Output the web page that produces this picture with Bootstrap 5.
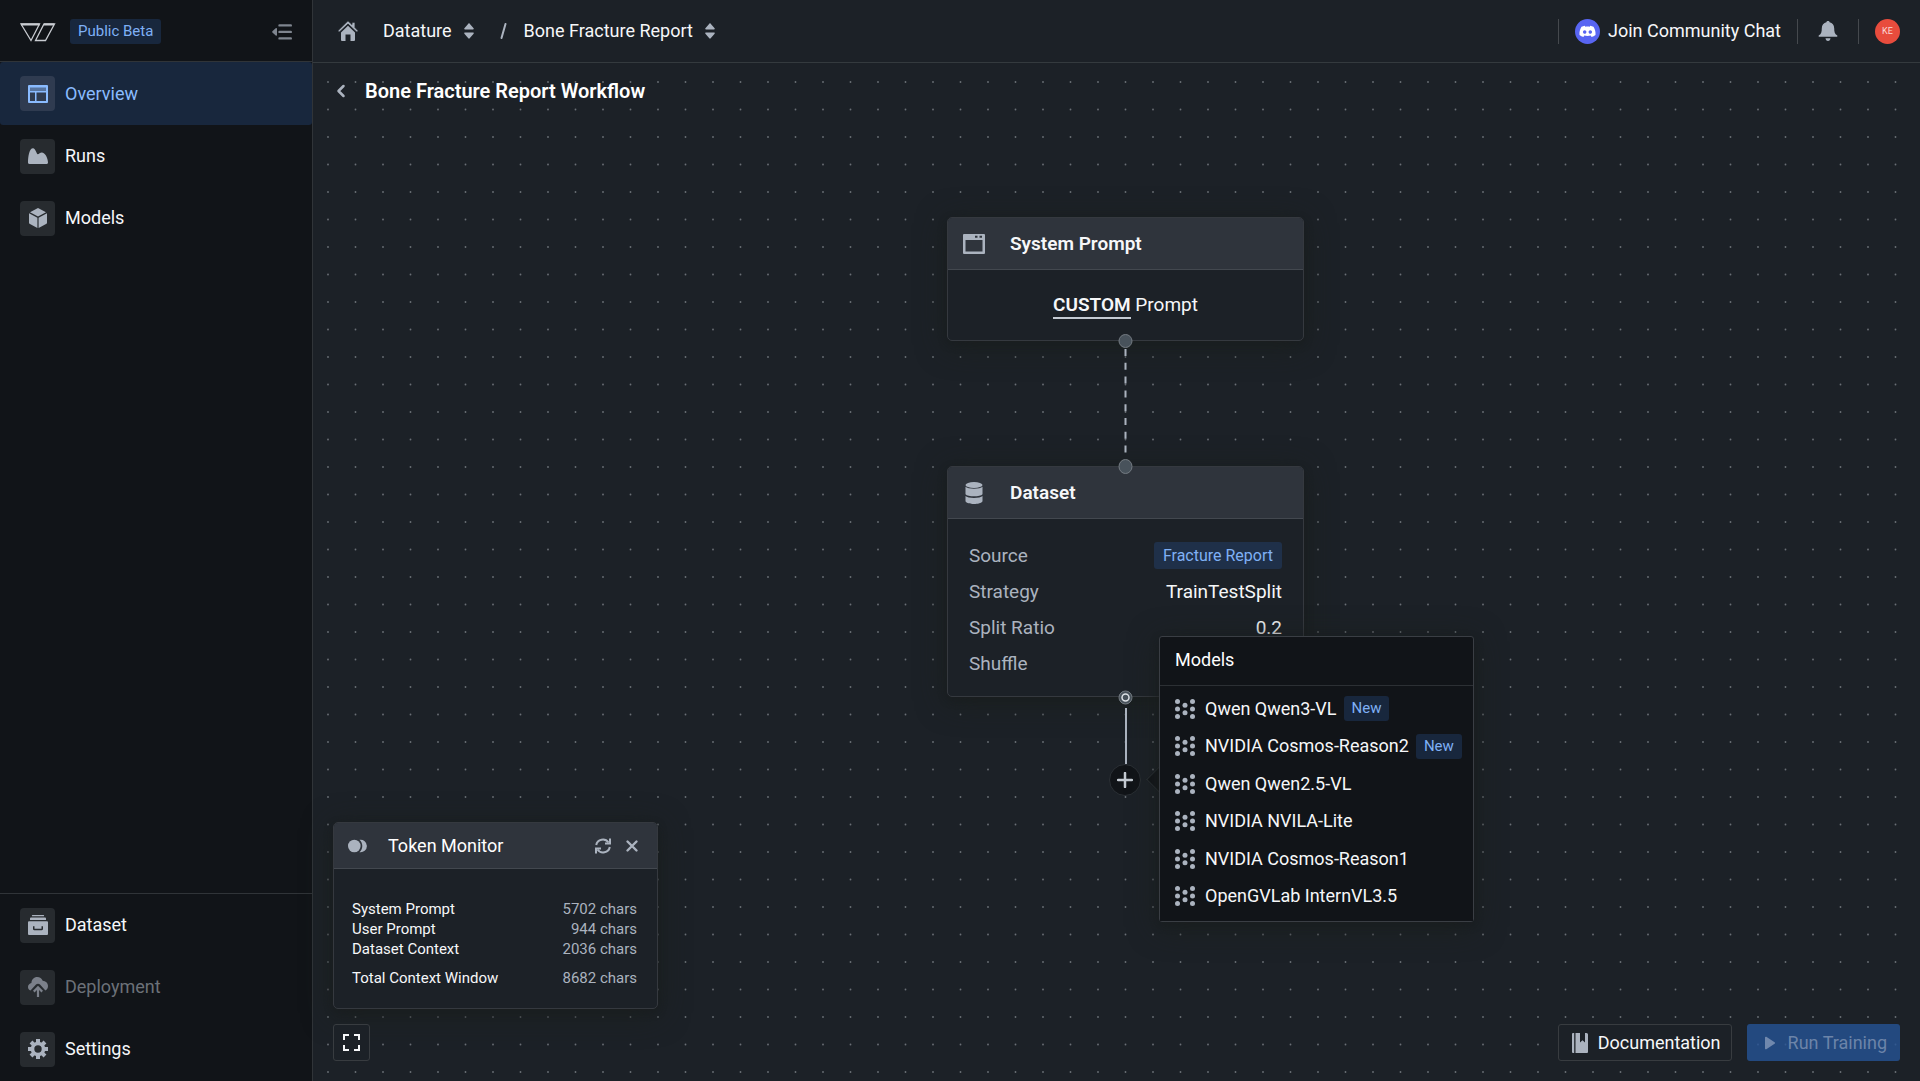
<!DOCTYPE html>
<html lang="en" data-bs-theme="dark">
<head>
<meta charset="utf-8">
<meta name="viewport" content="width=device-width, initial-scale=1">
<title>Bone Fracture Report Workflow</title>
<link href="https://cdn.jsdelivr.net/npm/bootstrap@5.3.0/dist/css/bootstrap.min.css" rel="stylesheet">
<style>
:root{--ink:#f6f7f9;--soft:#abb3bf;--deep:#111418;--base:#1c2127;--line:#303438;--blue:#8abbff}
body{font-family:Roboto,"Liberation Sans",sans-serif;font-size:18px;line-height:22px;color:var(--ink);background:var(--base)}
a{color:inherit;text-decoration:none}
svg{display:block;flex:none}
.ic{width:20px;height:20px;fill:var(--soft)}
.plain-btn{background:none;border:0;padding:0;color:inherit}
.side{width:313px;background:var(--deep);border-right:1px solid var(--line)}
.side-top{height:62px;padding:2px 20px 0;gap:14px;border-bottom:1px solid var(--line)}
.tag{background:#18273d;color:#7fb0f5;font-size:15px;line-height:25px;padding:0 8px;border-radius:3px}
.side-link{height:62px;padding:0 20px;gap:10px;border-radius:3px}
.side-foot{border-top:1px solid var(--line);padding-bottom:1px}
.side-link.active{height:63px;background:#18273d;color:var(--blue)}
.side-link.active .ic{fill:var(--blue)}
.side-link.active .tile{background:#2f3b50}
.side-link.disabled{color:#6c7178}
.side-link.disabled .ic{fill:#7b808a}
.tile{width:35px;height:35px;border-radius:4px;background:#272b2f}
.topbar{height:63px;padding:0 20px 0 25px;border-bottom:1px solid #343a3e}
.crumb{gap:12px}
.home-link{margin-right:13px}
.slash{margin:0 4px 0 12px}
.top-tools{gap:16px}
.chat-link{gap:8px}
.bell-btn{padding:0 3px}
.rule{width:1px;height:25px;background:#45494e}
.avatar{width:25px;height:25px;background:#e84c3d;font-size:9px;color:#fbd9d5}
.board{min-height:0}
.dots{position:absolute;inset:0;width:100%;height:100%}
.title-row{position:relative;padding:15px 20px 0 20px;gap:15px}
.title-row h1{font-size:20px;line-height:26px;font-weight:600;margin:0}
.panel{position:absolute;background:var(--base);border:1px solid #35393f;border-radius:5px;box-shadow:0 5px 30px rgba(28,32,30,.9),0 3px 8px rgba(17,20,24,.4)}
.panel-head{background:#2f343c;border-bottom:1px solid #43484f;border-radius:4px 4px 0 0}
.node{width:357px;left:634px}
.node .panel-head{height:52px;padding:0 14px;gap:24px;font-weight:600;font-size:19px}
.node-prompt{top:154px}
.node-data{top:403px}
.prompt-body{height:70px;padding-top:2px;font-size:19px}
.custom{font-weight:600;border-bottom:2px solid #c5cbd3;line-height:24px}
.data-body{padding:18px 21px 14px;font-size:19px}
.data-body dl>div{height:36px}
.data-body dl>div:first-child{height:37px}
dt{font-weight:400}
.data-body dt{color:var(--soft)}
.tag-lg{background:#1f3049;color:#7fb0f5;font-size:16px;line-height:27px;padding:0 9px;border-radius:3px}
.wires{position:absolute;left:0;top:0;width:1000px;height:760px;pointer-events:none}
.add-btn{position:absolute;left:796px;top:701px;width:32px;height:32px;border:1px solid #2b3035;background:var(--deep)}
.menu-pop{left:846px;top:573px;width:315px;background:var(--deep);border-color:#3a3e44;border-radius:3px}
.menu-pop::before{content:"";position:absolute;left:-10px;top:133px;width:19px;height:19px;background:var(--deep);border:1px solid #2b3035;border-width:0 0 1px 1px;transform:rotate(45deg);z-index:-1}
.menu-head{height:49px;padding:0 15px 2px;border-bottom:1px solid #2c3034;font-size:18px;font-weight:400;margin:0}
.menu-items{padding:4px 15px 6px;background:var(--deep)}
.menu-items a{height:37px;white-space:nowrap}
.menu-items a:nth-child(even){height:38px}
.menu-items .ic{margin-right:10px}
.menu-items .tag{margin-left:7px}
.monitor{left:20px;bottom:72px;width:325px}
.monitor .panel-head{height:46px;padding:0 18px 0 14px;gap:20px}
.monitor h2{font-size:18px;font-weight:400;margin:0}
.monitor-tools{gap:14px}
.monitor-body{padding:30px 20px 20px 18px;font-size:15px;line-height:20px}
.monitor-body dd{color:var(--soft)}
.total{margin-top:9px}
.dock{position:absolute;left:20px;right:20px;bottom:20px;gap:15px}
.dock-btn{height:37px;border:1px solid #383c40;border-radius:3px;background:var(--base);padding:0 10px 0 12px;gap:9px}
.dock-btn.dock-sq{width:37px;padding:0}
.dock-btn.run-btn{background:rgba(38,84,150,.8);border:0;color:#6c84a9;padding:0 13px 0 14px}
</style>
<script src="https://cdn.jsdelivr.net/npm/bootstrap@5.3.0/dist/js/bootstrap.bundle.min.js"></script>
</head>
<body>
<svg width="0" height="0" class="position-absolute" aria-hidden="true">
  <symbol id="caret" viewBox="0 0 10 16"><path d="M1 6.500h8c.8 0 1-.7.600-1.200L5.700.7c-.4-.5-1-.5-1.400 0L.4 5.300C0 5.800.2 6.500 1 6.500zM1 9.500h8c.8 0 1 .7.600 1.200l-3.900 4.600c-.4.5-1 .5-1.400 0L.4 10.700C0 10.200.2 9.500 1 9.500z"/></symbol>
  <symbol id="grid8" viewBox="0 0 20 20"><circle cx="2.500" cy="2.500" r="2.500"/><circle cx="2.500" cy="10" r="2.500"/><circle cx="2.500" cy="17.500" r="2.500"/><circle cx="10" cy="6.200" r="2.500"/><circle cx="10" cy="13.800" r="2.500"/><circle cx="17.500" cy="2.500" r="2.500"/><circle cx="17.500" cy="10" r="2.500"/><circle cx="17.500" cy="17.500" r="2.500"/></symbol>
</svg>
<div class="d-flex vh-100 overflow-hidden">
  <aside class="side d-flex flex-column flex-shrink-0">
    <div class="side-top d-flex align-items-center">
      <svg width="36" height="20" viewBox="0 0 36 20" fill="none" stroke="#c9ccd1" stroke-width="1.300" role="img" aria-label="Logo"><path d="M1 2h18.500L11 18.500z"/><path d="M24 2h10.500L25.500 18.500H15.500z"/><path d="M1 2.500h18.500M24 2.500h10" stroke-width="2"/></svg>
      <span class="tag me-auto">Public Beta</span>
      <button class="plain-btn" type="button" aria-label="Collapse menu"><svg class="ic" viewBox="0 0 20 20" style="fill:#7f858f"><path d="M7.500 2.200h11.300a1.200 1.200 0 0 1 0 2.400H7.500a1.200 1.200 0 0 1 0-2.400zM7.500 8.700h11.300a1.200 1.200 0 0 1 0 2.400H7.500a1.200 1.200 0 0 1 0-2.400zM7.500 15.200h11.300a1.200 1.200 0 0 1 0 2.400H7.500a1.200 1.200 0 0 1 0-2.400zM5 6.800v6.200c0 .8-.8 1-1.300.5L.4 10.600c-.4-.4-.4-1 0-1.400l3.300-2.900C4.200 5.800 5 6 5 6.800z"/></svg></button>
    </div>
    <nav class="d-flex flex-column flex-grow-1" aria-label="Project">
      <a href="#" class="side-link active d-flex align-items-center"><span class="tile d-flex align-items-center justify-content-center"><svg class="ic" viewBox="0 0 20 20"><path fill-rule="evenodd" d="M1 1h18a1 1 0 0 1 1 1v16a1 1 0 0 1-1 1H1a1 1 0 0 1-1-1V2a1 1 0 0 1 1-1zM2 3.500V7h16V3.500zM2 8.500V17h5V8.500zM8.500 8.500V17H18V8.500z"/><path opacity=".45" d="M2 3h16v4H2z"/></svg></span>Overview</a>
      <a href="#" class="side-link d-flex align-items-center"><span class="tile d-flex align-items-center justify-content-center"><svg class="ic" viewBox="0 0 20 20"><path d="M1.300 18C.5 18 0 17.500 0 16.800 0 10 1.500 2.200 5 2.200c2.700 0 3.500 6 4.800 6 1.200 0 2.200-1.700 4-1.700 3.200 0 6.200 5.500 6.200 10.300 0 .7-.5 1.200-1.200 1.200z"/></svg></span>Runs</a>
      <a href="#" class="side-link d-flex align-items-center"><span class="tile d-flex align-items-center justify-content-center"><svg class="ic" viewBox="0 0 20 20"><path d="M10 0l8 4.200-8 4.300-8-4.300zM1 5.300l8.400 4.500V20L1.500 15.700a1 1 0 0 1-.5-.9zM19 5.300l-8.400 4.500V20l7.900-4.300a1 1 0 0 0 .5-.9z"/></svg></span>Models</a>
    </nav>
    <nav class="side-foot d-flex flex-column" aria-label="Workspace">
      <a href="#" class="side-link d-flex align-items-center"><span class="tile d-flex align-items-center justify-content-center"><svg class="ic" viewBox="0 0 20 20"><path d="M4.500 0h11a.6.600 0 0 1 0 1.300h-11a.6.600 0 0 1 0-1.300zM3 2.500h14a1 1 0 0 1 1 1V5H2V3.500a1 1 0 0 1 1-1z"/><path fill-rule="evenodd" d="M1 6.200h18a1 1 0 0 1 1 1V19a1 1 0 0 1-1 1H1a1 1 0 0 1-1-1V7.200a1 1 0 0 1 1-1zM5 11.200V14c0 .7.500 1.200 1.200 1.200h7.600c.7 0 1.200-.5 1.200-1.200v-2.800h-1.500v2.500h-7v-2.500z"/></svg></span>Dataset</a>
      <a href="#" class="side-link disabled d-flex align-items-center" aria-disabled="true"><span class="tile d-flex align-items-center justify-content-center"><svg class="ic" viewBox="0 0 20 20"><path d="M2.500 13.500C1 13 0 11.700 0 10c0-2 1.500-3.600 3.400-4C3.600 2.500 6 0 9.200 0c2.600 0 4.700 1.500 5.500 3.700C17.500 3.800 20 6 20 9c0 2-1 3.700-2.600 4.500L12 7.500c-1-1-3-1-4 0z"/><path d="M10 8.800l5 5-1.600 1.600-2.300-2.300V20H8.900v-6.900l-2.300 2.300L5 13.800z"/></svg></span>Deployment</a>
      <a href="#" class="side-link d-flex align-items-center"><span class="tile d-flex align-items-center justify-content-center"><svg class="ic" viewBox="0 0 20 20"><g fill="none" stroke="#abb3bf"><circle cx="10" cy="10" r="5.500" stroke-width="3.600"/><path stroke-width="4" d="M10 0v4M10 16v4M0 10h4M16 10h4M3 3l2.700 2.700M14.300 14.300L17 17M17 3l-2.700 2.700M5.700 14.300L3 17"/></g></svg></span>Settings</a>
    </nav>
  </aside>
  <div class="d-flex flex-column flex-grow-1">
    <header class="topbar d-flex align-items-center justify-content-between">
      <div class="d-flex align-items-center crumb">
        <a href="#" aria-label="Home" class="home-link"><svg class="ic" viewBox="0 0 20 20"><path d="M3 11.500l7-6.800 7 6.800V19a1 1 0 0 1-1 1h-3.500v-6.500h-5V20H4a1 1 0 0 1-1-1z"/><path stroke="#1c2127" stroke-width=".8" d="M.4 9.200L9.200.5c.5-.5 1.100-.5 1.600 0L14 3.500V1.300h3V6.500l2.600 2.700c.6.6.5 1-.1 1.500-.5.400-1 .3-1.500-.2L10 3 2 10.500c-.5.500-1 .6-1.500.2-.6-.5-.7-.9-.1-1.500z"/></svg></a>
        <a href="#">Datature</a>
        <button class="plain-btn" type="button" aria-label="Switch workspace"><svg width="10" height="16" fill="#abb3bf"><use href="#caret"/></svg></button>
        <svg class="slash" width="10" height="16" viewBox="0 0 10 16" aria-hidden="true"><path d="M7.500 1L3.500 15" stroke="#abb3bf" stroke-width="2" stroke-linecap="round"/></svg>
        <a href="#">Bone Fracture Report</a>
        <button class="plain-btn" type="button" aria-label="Switch project"><svg width="10" height="16" fill="#abb3bf"><use href="#caret"/></svg></button>
      </div>
      <div class="d-flex align-items-center top-tools">
        <span class="rule"></span>
        <a href="#" class="chat-link d-flex align-items-center"><svg width="25" height="25" viewBox="0 0 25 25"><circle cx="12.500" cy="12.500" r="12.500" fill="#5865f2"/><path fill="#fff" fill-rule="evenodd" d="M9.800 6.700L10.300 7.700c1.400-.2 3-.2 4.400 0l.5-1c1.200.2 2.300.6 3.300 1.100 1.600 2.500 2.300 5.300 2 8.300-1.200.9-2.500 1.500-3.900 1.900l-.9-1.400c-2 .6-4.400.6-6.400 0L8.400 18c-1.400-.4-2.700-1-3.900-1.900-.3-3 .4-5.800 2-8.300 1-.5 2.100-.9 3.300-1.100zM9.700 11.200c-1 0-1.700.8-1.700 1.800s.8 1.800 1.700 1.800 1.700-.8 1.700-1.800-.7-1.800-1.700-1.800zm5.600 0c-1 0-1.700.8-1.700 1.800s.8 1.800 1.700 1.800 1.700-.8 1.700-1.800-.7-1.800-1.700-1.800z"/></svg>Join Community Chat</a>
        <span class="rule"></span>
        <button class="plain-btn bell-btn" type="button" aria-label="Notifications"><svg width="22" height="20" viewBox="-1 0 22 20" fill="#abb3bf"><path d="M10 0c.9 0 1.500.5 1.600 1.300 2.700.6 4.600 3 4.600 5.900 0 3.500.6 6 2.800 7 .8.500.4 1.600-.4 1.600H1.400c-.8 0-1.200-1.100-.4-1.600 2.200-1 2.800-3.500 2.800-7 0-2.900 1.900-5.300 4.600-5.900C8.500.5 9.100 0 10 0zM7.500 17.200h5c-.1 1.600-1.100 2.800-2.500 2.800s-2.400-1.200-2.500-2.800z"/></svg></button>
        <span class="rule"></span>
        <button class="plain-btn avatar rounded-circle" type="button">KE</button>
      </div>
    </header>
    <main class="board position-relative flex-grow-1">
      <svg class="dots" aria-hidden="true"><defs><pattern id="dotgrid" x="14" y="18" width="55" height="55" patternUnits="userSpaceOnUse" fill="#6a6f75"><circle cx="1" cy="1" r=".9"/><circle cx="28.500" cy="1" r=".9"/><circle cx="1" cy="28.500" r=".9"/><circle cx="28.500" cy="28.500" r=".9"/></pattern></defs><rect width="100%" height="100%" fill="url(#dotgrid)"/></svg>
      <div class="title-row d-flex align-items-center">
        <a href="#" aria-label="Back"><svg width="17" height="16" viewBox="0 0 17 16" fill="none" stroke="#abb3bf" stroke-width="2.500" stroke-linecap="round" stroke-linejoin="round"><path d="M10.500 3l-5 5 5 5"/></svg></a>
        <h1>Bone Fracture Report Workflow</h1>
      </div>

      <section class="panel node node-prompt">
        <div class="panel-head d-flex align-items-center"><svg width="24" height="20" viewBox="0 0 24 20" fill="#abb3bf"><path fill-rule="evenodd" d="M2 0h20a1 1 0 0 1 1 1v18a1 1 0 0 1-1 1H2a1 1 0 0 1-1-1V1a1 1 0 0 1 1-1zM3.500 6v11.500h17V6zM13 1.800v2h2.500v-2zm4.500 0v2H20v-2z"/></svg>System Prompt</div>
        <div class="prompt-body d-flex align-items-center justify-content-center"><div><a href="#" class="custom d-inline-block">CUSTOM</a> Prompt</div></div>
      </section>

      <section class="panel node node-data">
        <div class="panel-head d-flex align-items-center"><svg width="24" height="22" viewBox="0 0 24 22" fill="#abb3bf"><ellipse cx="12" cy="3" rx="8.500" ry="3"/><path d="M3.500 4.800c2 2.500 15 2.500 17 0v7.400c-2 2.700-15 2.700-17 0zM3.500 14c2 2.500 15 2.500 17 0v5.200c-2 3.700-15 3.700-17 0z"/></svg>Dataset</div>
        <div class="data-body">
          <dl class="mb-0">
            <div class="d-flex align-items-center justify-content-between"><dt>Source</dt><dd class="mb-0 tag-lg">Fracture Report</dd></div>
            <div class="d-flex align-items-center justify-content-between"><dt>Strategy</dt><dd class="mb-0">TrainTestSplit</dd></div>
            <div class="d-flex align-items-center justify-content-between"><dt>Split Ratio</dt><dd class="mb-0">0.2</dd></div>
            <div class="d-flex align-items-center justify-content-between"><dt>Shuffle</dt></div>
          </dl>
        </div>
      </section>

      <svg class="wires" viewBox="0 0 1000 760" fill="none" aria-hidden="true">
        <path d="M812.500 286v106" stroke="#abb3bf" stroke-width="2" stroke-dasharray="7 6.800"/>
        <path d="M813 645v56" stroke="#abb3bf" stroke-width="2"/>
        <g fill="#48525b" stroke="#747b82"><circle cx="812.500" cy="278" r="6.500"/><ellipse cx="812.500" cy="403.500" rx="6.500" ry="7"/><circle cx="812.500" cy="634.500" r="6.500"/></g>
        <circle cx="812.500" cy="634.500" r="3.500" stroke="#dfe3e8" stroke-width="1.500" fill="#48525b"/>
      </svg>
      <button class="add-btn rounded-circle d-flex align-items-center justify-content-center p-0" type="button" aria-label="Add model"><svg width="16" height="16" viewBox="0 0 16 16" stroke="#c5cbd3" stroke-width="2.500" stroke-linecap="round"><path d="M8 1v14M1 8h14"/></svg></button>

      <section class="panel menu-pop">
        <h2 class="menu-head d-flex align-items-center">Models</h2>
        <div class="menu-items d-flex flex-column">
          <a href="#" class="d-flex align-items-center"><svg class="ic"><use href="#grid8"/></svg>Qwen Qwen3-VL<span class="tag">New</span></a>
          <a href="#" class="d-flex align-items-center"><svg class="ic"><use href="#grid8"/></svg>NVIDIA Cosmos-Reason2<span class="tag">New</span></a>
          <a href="#" class="d-flex align-items-center"><svg class="ic"><use href="#grid8"/></svg>Qwen Qwen2.5-VL</a>
          <a href="#" class="d-flex align-items-center"><svg class="ic"><use href="#grid8"/></svg>NVIDIA NVILA-Lite</a>
          <a href="#" class="d-flex align-items-center"><svg class="ic"><use href="#grid8"/></svg>NVIDIA Cosmos-Reason1</a>
          <a href="#" class="d-flex align-items-center"><svg class="ic"><use href="#grid8"/></svg>OpenGVLab InternVL3.5</a>
        </div>
      </section>

      <section class="panel monitor">
        <div class="panel-head d-flex align-items-center">
          <svg class="ic" viewBox="0 0 20 20"><circle cx="6.300" cy="10" r="6.300"/><path d="M11.500 3.800a6.300 6.300 0 1 1 0 12.400c1.700-1.600 2.800-3.800 2.800-6.200s-1.100-4.600-2.800-6.200z"/></svg>
          <h2 class="me-auto">Token Monitor</h2>
          <div class="d-flex monitor-tools">
            <button class="plain-btn" type="button" aria-label="Refresh"><svg width="16" height="16" viewBox="0 0 16 16" fill="none" stroke="#abb3bf" stroke-width="2"><path d="M1.200 7A6.800 6.800 0 0 1 13.500 4.500M14.800 9A6.800 6.800 0 0 1 2.500 11.500"/><path d="M15 .5V5.500H10M1 15.500v-5h5"/></svg></button>
            <button class="plain-btn" type="button" aria-label="Close"><svg width="14" height="16" viewBox="0 0 14 16" fill="none" stroke="#abb3bf" stroke-width="2.400" stroke-linecap="round"><path d="M2.500 3.500l9 9M11.500 3.500l-9 9"/></svg></button>
          </div>
        </div>
        <dl class="monitor-body mb-0">
          <div class="d-flex justify-content-between"><dt>System Prompt</dt><dd class="mb-0">5702 chars</dd></div>
          <div class="d-flex justify-content-between"><dt>User Prompt</dt><dd class="mb-0">944 chars</dd></div>
          <div class="d-flex justify-content-between"><dt>Dataset Context</dt><dd class="mb-0">2036 chars</dd></div>
          <div class="d-flex justify-content-between total"><dt>Total Context Window</dt><dd class="mb-0">8682 chars</dd></div>
        </dl>
      </section>

      <div class="dock d-flex align-items-center">
        <button class="dock-btn dock-sq d-flex align-items-center justify-content-center me-auto" type="button" aria-label="Fit view"><svg width="17" height="17" viewBox="0 0 17 17" fill="none" stroke="#f6f7f9" stroke-width="2"><path d="M1 6V1h5M11 1h5v5M16 11v5h-5M6 16H1v-5"/></svg></button>
        <a href="#" class="dock-btn d-flex align-items-center"><svg width="18" height="20" viewBox="0 0 18 20" fill="#abb3bf"><path d="M2 0h1.200v20H2a1 1 0 0 1-1-1V1a1 1 0 0 1 1-1zM4.500 0H9v9.500l2.500-2.200L14 9.500V0h1.500A1.500 1.500 0 0 1 17 1.500V19a1 1 0 0 1-1 1H4.500z"/></svg>Documentation</a>
        <button class="dock-btn run-btn d-flex align-items-center" type="button" disabled><svg width="18" height="16" viewBox="0 0 18 16" fill="#7088ad"><path d="M4 2.600c0-.8.700-1.200 1.300-.8l8.300 5.400c.6.400.6 1.200 0 1.600l-8.300 5.400c-.6.400-1.300 0-1.300-.8z"/></svg>Run Training</button>
      </div>
    </main>
  </div>
</div>
</body>
</html>
